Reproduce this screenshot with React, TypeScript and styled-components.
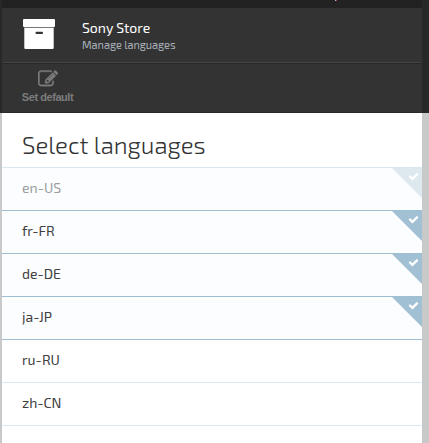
import React from 'react';
import styled, { createGlobalStyle } from 'styled-components';

const GlobalStyle = createGlobalStyle`
  * { box-sizing: border-box; }
  html, body { margin: 0; padding: 0; overflow: hidden; }
  body { background: #c9c9c9; }
`;

const uiFont = `'Exo 2', 'Open Sans', 'Noto Sans', sans-serif`;

const Screen = styled.div`
  width: 429px;
  height: 443px;
  padding: 0 7px 0 2px;
  overflow: hidden;
  background: linear-gradient(#282828 113px, #c9c9c9 113px);
  font-family: ${uiFont};
`;

const Panel = styled.main`
  height: 443px;
  display: flex;
  flex-direction: column;
  background: #fff;
`;

const TopStrip = styled.div`
  flex: none;
  height: 8px;
  padding-left: 333px;
  background: #222;
`;

const Speck = styled.div`
  width: 2px;
  height: 1px;
  background: linear-gradient(90deg, #b9b6ea 50%, #a8384c 50%);
`;

const Header = styled.header`
  flex: none;
  height: 56px;
  display: flex;
  padding: 11px 0 0 21px;
  background: #333;
  border-bottom: 1px solid #282828;
  box-shadow: inset 0 -1px #434343;
`;

const HeaderText = styled.div`
  margin-left: 27px;
`;

const StoreName = styled.div`
  height: 18px;
  font-size: 14px;
  line-height: 18px;
  color: #fff;
`;

const Subtitle = styled.div`
  height: 16px;
  font-size: 11px;
  line-height: 16px;
  letter-spacing: -0.05px;
  color: #a9b0b8;
`;

const Toolbar = styled.div`
  flex: none;
  height: 49px;
  display: flex;
  padding: 5px 0 0 20px;
  background: #333;
  border-bottom: 1px solid #292929;
`;

const ToolButton = styled.button`
  display: flex;
  flex-direction: column;
  align-items: center;
  align-self: flex-start;
  width: 51px;
  padding: 0;
  border: 0;
  background: none;
  color: #7c7c7c;
  font: bold 11px/14px 'Liberation Sans', Arial, sans-serif;
  letter-spacing: -0.45px;
  white-space: nowrap;

  svg { display: block; flex: none; margin-bottom: 1px; }
`;

const Title = styled.h1`
  flex: none;
  height: 54px;
  margin: 0;
  padding: 15px 0 0 20px;
  font-size: 24px;
  line-height: 34px;
  font-weight: 300;
  color: #333;
  white-space: nowrap;
`;

const List = styled.ul`
  margin: 0;
  padding: 0;
  list-style: none;
  border-bottom: 1px solid #d9e7ee;
`;

type Tone = 'default' | 'selected' | 'plain';

const Row = styled.li<{ $tone: Tone; $strongTop: boolean }>`
  display: flex;
  justify-content: space-between;
  height: 43px;
  padding-left: 20px;
  border-top: 1px solid ${p => (p.$strongTop ? '#9fbfd3' : '#d9e7ee')};
  background: ${p => (p.$tone === 'plain' ? '#fff' : '#fbfdff')};
  color: ${p => (p.$tone === 'default' ? '#9c9e9f' : '#404040')};
  font-size: 14px;
  line-height: 39px;
`;

const Corner = styled.span<{ $faded: boolean }>`
  width: 30px;
  height: 30px;
  padding: 3px 0 0 15.5px;
  background: ${p => (p.$faded ? '#dee9ef' : '#a2c0d4')};
  clip-path: polygon(0 0, 100% 0, 100% 100%);
  color: #fff;

  svg { display: block; }
`;

const BoxIcon = () => (
  <svg width="32" height="30" viewBox="0 0 32 30">
    <rect width="32" height="8" rx="1" fill="#fff" />
    <path d="M1.3 8.5h29.4V29a1 1 0 0 1-1 1H2.3a1 1 0 0 1-1-1z" fill="#fff" />
    <rect x="1" y="8" width="30" height="1" fill="#777" />
    <rect x="12.5" y="12.7" width="7.5" height="2.3" rx="1" fill="#333" />
  </svg>
);

const EditIcon = () => (
  <svg width="20" height="20" viewBox="0 0 1792 1792" fill="currentColor" stroke="currentColor" strokeWidth="35">
    <path d="M888 1184l116-116-152-152-116 116v56h96v96h56zm440-720q-16-16-33 1l-350 350q-17 17-1 33t33-1l350-350q17-17 1-33zm80 594v190q0 119-84.5 203.5t-203.5 84.5h-832q-119 0-203.5-84.5t-84.5-203.5v-832q0-119 84.5-203.5t203.5-84.5h832q63 0 117 25 15 7 18 23 3 17-9 29l-49 49q-14 14-32 8-23-6-45-6h-832q-66 0-113 47t-47 113v832q0 66 47 113t113 47h832q66 0 113-47t47-113v-126q0-13 9-22l64-64q15-15 35-7t20 29zm-96-738l288 288-672 672h-288v-288zm444 132l-92 92-288-288 92-92q28-28 68-28t68 28l152 152q28 28 28 68t-28 68z" />
  </svg>
);

const CheckIcon = () => (
  <svg width="11" height="11" viewBox="0 0 1792 1792" fill="currentColor">
    <path d="M1671 566q0 40-28 68l-724 724-136 136q-28 28-68 28t-68-28l-136-136-362-362q-28-28-28-68t28-68l136-136q28-28 68-28t68 28l294 295 656-657q28-28 68-28t68 28l136 136q28 28 28 68z" />
  </svg>
);

const languages: { code: string; tone: Tone }[] = [
  { code: 'en-US', tone: 'default' },
  { code: 'fr-FR', tone: 'selected' },
  { code: 'de-DE', tone: 'selected' },
  { code: 'ja-JP', tone: 'selected' },
  { code: 'ru-RU', tone: 'plain' },
  { code: 'zh-CN', tone: 'plain' },
];

export default function App() {
  return (
    <>
      <GlobalStyle />
      <Screen>
        <Panel>
          <TopStrip><Speck /></TopStrip>
          <Header>
            <BoxIcon />
            <HeaderText>
              <StoreName>Sony Store</StoreName>
              <Subtitle>Manage languages</Subtitle>
            </HeaderText>
          </Header>
          <Toolbar>
            <ToolButton><EditIcon />Set default</ToolButton>
          </Toolbar>
          <Title>Select languages</Title>
          <List>
            {languages.map(({ code, tone }, i) => (
              <Row key={code} $tone={tone} $strongTop={i > 0 && languages[i - 1].tone !== 'plain'}>
                {code}
                {tone !== 'plain' && (
                  <Corner $faded={tone === 'default'}><CheckIcon /></Corner>
                )}
              </Row>
            ))}
          </List>
        </Panel>
      </Screen>
    </>
  );
}
